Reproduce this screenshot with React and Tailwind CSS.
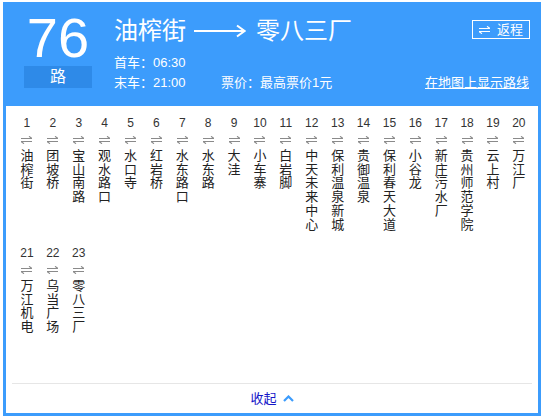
import React from 'react';

const stops = [
  '油榨街', '团坡桥', '宝山南路', '观水路口', '水口寺', '红岩桥', '水东路口', '水东路', '大洼', '小车寨',
  '白岩脚', '中天未来中心', '保利温泉新城', '贵御温泉', '保利春天大道', '小谷龙', '新庄污水厂', '贵州师范学院', '云上村', '万江厂',
  '万江机电', '乌当广场', '零八三厂',
];

const font = { fontFamily: '"Liberation Sans", "Noto Sans CJK SC", sans-serif' };

const SwapIcon = ({ color = '#8a8a8a', className = '' }) => (
  <svg className={className} width="11" height="8" viewBox="0 0 11 8" fill="none" stroke={color} strokeWidth="1.1">
    <path d="M0 2.5H11L8 0.3" />
    <path d="M11 5.5H0L3 7.7" />
  </svg>
);

const Stop = ({ index, name }) => (
  <li className="w-[25.9px] h-[130px] flex flex-col items-center">
    <div className="text-[12px] leading-[14px] text-[#333]">{index}</div>
    <SwapIcon className="mt-[6px]" />
    <div className="mt-[5px] flex flex-col items-center text-[13px] leading-[13.7px] text-[#222]">
      {name.split('').map((c, i) => (
        <span key={i}>{c}</span>
      ))}
    </div>
  </li>
);

export default function App() {
  return (
    <div style={font} className="ml-[3px] mt-[2px] w-[538px] border-[3px] border-[#3c9cfc] bg-white">
      <div className="h-[101px] bg-[#3c9cfc] flex text-white pl-[18px] pr-[8px]">
        <div className="w-[68px] flex flex-col items-center pt-[4px]">
          <div className="text-[56px] leading-[57px]">76</div>
          <div className="w-[68px] h-[22px] leading-[22px] text-center text-[16px] bg-[#2e8ae8]">路</div>
        </div>
        <div className="flex-1 ml-[22px] pt-[10px]">
          <div className="flex items-start justify-between">
            <div className="flex items-center text-[24px] leading-[32px]">
              <span>油榨街</span>
              <svg className="ml-[8px] mr-[10px]" width="52" height="14" viewBox="0 0 52 14" fill="none" stroke="white">
                <path d="M0 7H50" strokeWidth="2" />
                <path d="M43 1.5L50.5 7L43 12.5" strokeWidth="2" />
              </svg>
              <span>零八三厂</span>
            </div>
            <div className="mt-[5px] h-[19px] w-[58px] border border-white flex items-center justify-center text-[13px] leading-[17px]">
              <SwapIcon color="white" className="mr-[7px]" />
              <span>返程</span>
            </div>
          </div>
          <div className="mt-[5.5px] text-[13px] leading-[20px]">首车：06:30</div>
          <div className="flex text-[13px] leading-[20px]">
            <span className="w-[107px]">末车：21:00</span>
            <span>票价：最高票价1元</span>
            <span className="ml-auto mr-[1px] underline">在地图上显示路线</span>
          </div>
        </div>
      </div>
      <ul className="pt-[10px] pl-[8px] flex flex-wrap">
        {stops.map((s, i) => (
          <Stop key={i} index={i + 1} name={s} />
        ))}
      </ul>
      <div className="mt-[7px] mx-[6px] h-px bg-[#e6e6e6]" />
      <div className="h-[29px] flex items-center justify-center">
        <span className="text-[13px] text-[#1515c8]">收起</span>
        <svg className="ml-[6px]" width="11" height="7" viewBox="0 0 11 7" fill="none" stroke="#3c9cfc" strokeWidth="2.2">
          <path d="M1 6L5.5 1.5L10 6" />
        </svg>
      </div>
    </div>
  );
}
